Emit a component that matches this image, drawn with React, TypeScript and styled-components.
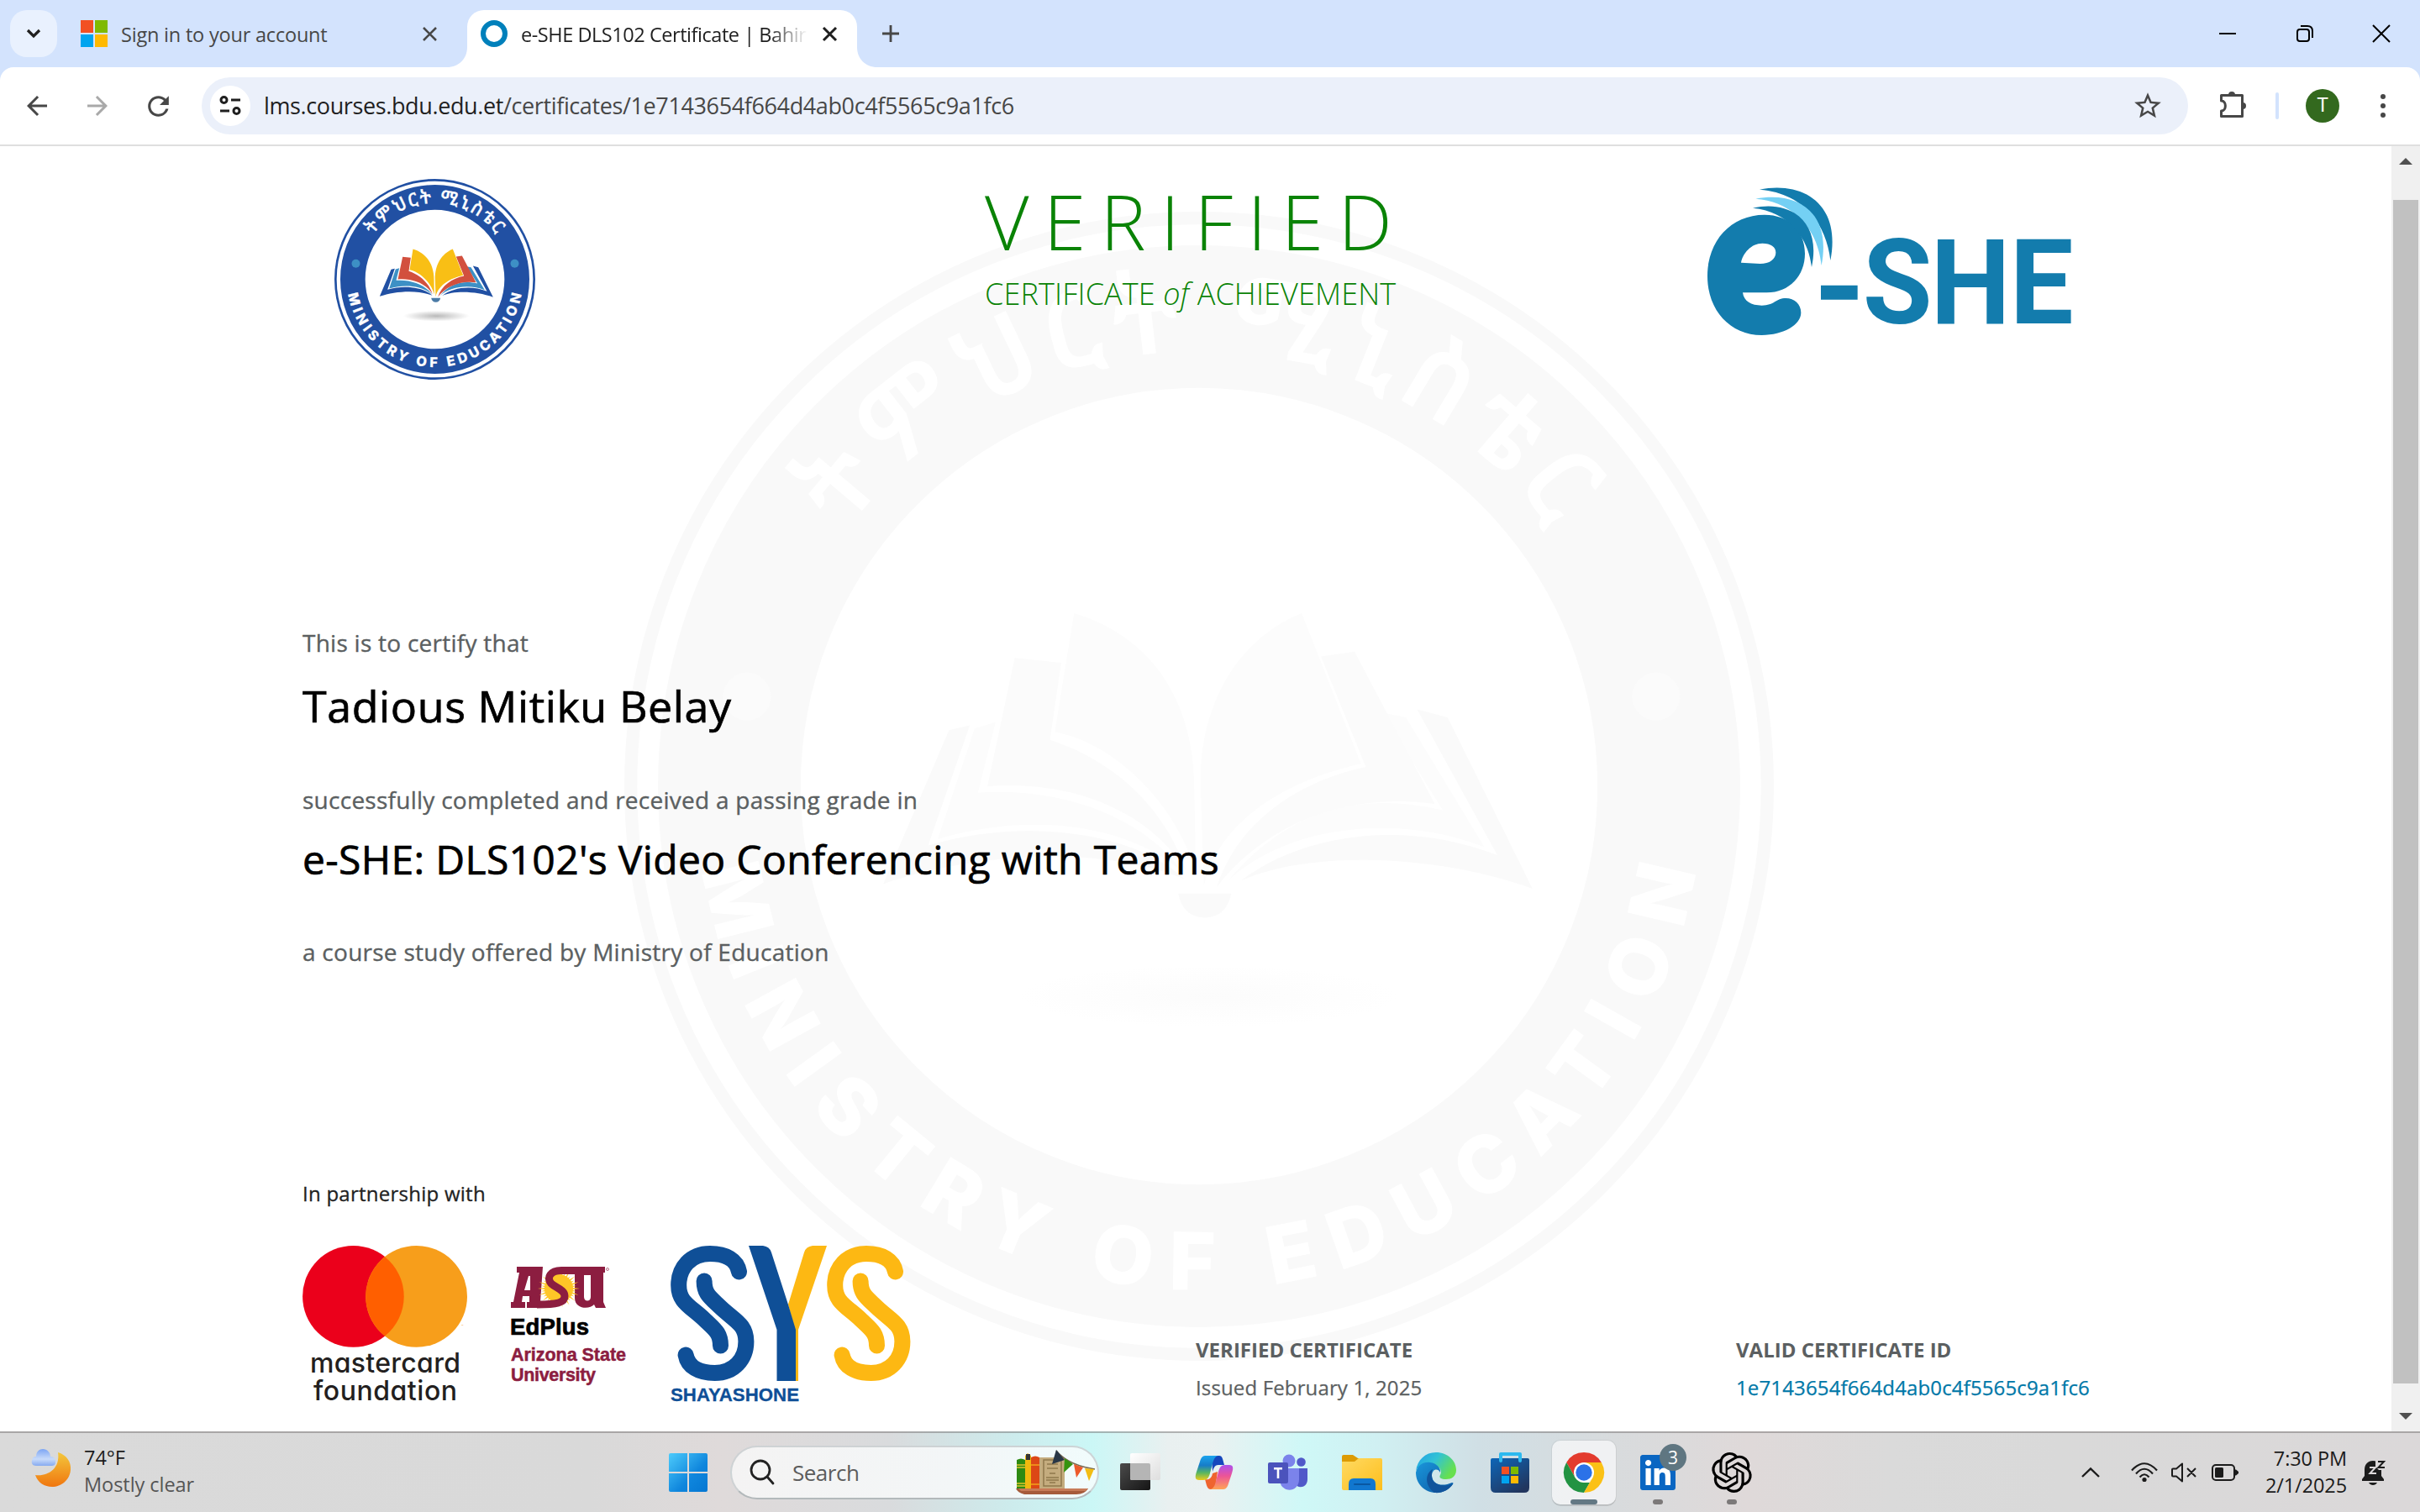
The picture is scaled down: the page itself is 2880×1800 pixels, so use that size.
import React from "react";
import styled, { createGlobalStyle } from "styled-components";
import { MdArrowBack, MdArrowForward, MdRefresh, MdStarBorder } from "react-icons/md";
import { FaLinkedin } from "react-icons/fa";
import { SiOpenai } from "react-icons/si";

const ui = `"Open Sans", "Noto Sans", sans-serif`;

const Global = createGlobalStyle`
  * { box-sizing: border-box; }
  html, body { margin: 0; padding: 0; }
  body { width: 2880px; height: 1800px; overflow: hidden; background: #fff; font-family: ${ui}; }
  svg { display: block; flex: none; overflow: visible; }
`;

const Screen = styled.div`
  width: 2880px;
  height: 1800px;
  display: flex;
  flex-direction: column;
  overflow: hidden;
`;

/* ---------- browser chrome ---------- */

const TabStrip = styled.header`
  height: 80px;
  flex: none;
  display: flex;
  align-items: flex-start;
  padding: 12px 36px 0 12px;
  background: #d3e3fd;
`;

const TabSearch = styled.button`
  width: 56px;
  height: 56px;
  border: 0;
  padding: 0;
  border-radius: 20px;
  background: #e9f1fe;
  display: grid;
  place-items: center;
`;

const Tab = styled.div<{ $active?: boolean; $width: number; $left?: number }>`
  position: relative;
  width: ${(p) => p.$width}px;
  height: ${(p) => (p.$active ? 68 : 56)}px;
  margin-left: ${(p) => p.$left ?? 0}px;
  padding: 0 ${(p) => (p.$active ? 24 : 36)}px ${(p) => (p.$active ? 12 : 0)}px 16px;
  border-radius: 20px 20px 0 0;
  background: ${(p) => (p.$active ? "#fff" : "transparent")};
  color: ${(p) => (p.$active ? "#1f1f1f" : "#474747")};
  display: flex;
  align-items: center;
  gap: 16px;
`;

const TabFoot = styled.svg<{ $side: "left" | "right" }>`
  position: absolute;
  bottom: 0;
  ${(p) => p.$side}: -24px;
  transform: ${(p) => (p.$side === "left" ? "none" : "scaleX(-1)")};
`;

const TabTitle = styled.span<{ $fade?: boolean; $spacing: number }>`
  flex: 1;
  min-width: 0;
  padding-top: 1px;
  overflow: hidden;
  white-space: nowrap;
  font-size: 23.5px;
  line-height: 36px;
  letter-spacing: ${(p) => p.$spacing}px;
  mask-image: ${(p) => (p.$fade ? "linear-gradient(90deg, #000 calc(100% - 48px), transparent calc(100% - 2px))" : "none")};
`;

const NewTab = styled.div`
  margin: 18px 0 0 30px;
`;

const WindowControls = styled.div`
  margin: 18px 0 0 auto;
  display: flex;
  align-items: center;
  gap: 71.500px;
`;

const ToolbarBack = styled.div`
  background: #d3e3fd;
  flex: none;
`;

const Toolbar = styled.nav`
  height: 94px;
  padding: 12px 41px 0 26px;
  border-radius: 16px 16px 0 0;
  border-bottom: 2px solid #dfdfdf;
  background: #fff;
  display: flex;
  align-items: flex-start;
  color: #474747;
`;

const NavButtons = styled.div`
  width: 214px;
  height: 68px;
  display: flex;
  align-items: center;
  gap: 36px;
  & > svg:nth-child(2) { color: #a9a9a9; }
`;

const Omnibox = styled.div`
  width: 2364px;
  height: 68px;
  padding: 0 29px 0 10px;
  border-radius: 34px;
  background: #ebf0fa;
  display: flex;
  align-items: center;
`;

const SiteInfo = styled.span`
  width: 48px;
  height: 48px;
  border-radius: 50%;
  background: #fff;
  display: grid;
  place-items: center;
`;

const Url = styled.span`
  flex: 1;
  margin-left: 16px;
  padding-bottom: 1px;
  font-size: 27px;
  letter-spacing: -0.38px;
  color: #474747;
  b { font-weight: 400; color: #1f1f1f; }
`;

const ToolbarEnd = styled.div`
  height: 68px;
  margin-left: auto;
  display: flex;
  align-items: center;
`;

const Divider = styled.i`
  width: 4px;
  height: 32px;
  margin: 0 32px 0 34px;
  border-radius: 2px;
  background: #d3e3fd;
`;

const Avatar = styled.span`
  width: 40px;
  height: 40px;
  border-radius: 50%;
  background: #33691e;
  color: #fff;
  font: 400 23px/40px Roboto, sans-serif;
  text-align: center;
`;

/* ---------- certificate ---------- */

const Viewport = styled.main`
  height: 1530px;
  flex: none;
  display: flex;
  background: #fff;
`;

const Certificate = styled.article`
  position: relative;
  width: 2846px;
  padding-left: 360px;
  overflow: hidden;
  display: flex;
  flex-direction: column;
`;

const Watermark = styled.div`
  position: absolute;
  left: 743px;
  top: 78px;
`;

const Layer = styled.div`
  position: relative;
  display: flex;
  flex-direction: column;
`;

const CertHeader = styled.header`
  height: 571px;
  padding: 39px 0 0 38px;
  display: flex;
  align-items: flex-start;
`;

const Heading = styled.div`
  width: 860px;
  margin: -2px 0 0 535px;
  color: #0a8306;
  font-weight: 300;
  white-space: nowrap;
`;

const Verified = styled.h1`
  margin: 0;
  font-size: 91px;
  line-height: 104px;
  font-weight: 300;
  letter-spacing: 17.4px;
`;

const Achievement = styled.p`
  margin: 13px 0 0;
  font-size: 36px;
  line-height: 44px;
  letter-spacing: 0.13px;
`;

const HeaderLogo = styled.div`
  padding-top: 9px;
`;

const Note = styled.p<{ $gap?: number }>`
  margin: ${(p) => p.$gap ?? 0}px 0 0;
  font-size: 28px;
  line-height: 40px;
  letter-spacing: 0.26px;
  -webkit-text-stroke: 0.35px currentColor;
  color: #5b5f61;
  white-space: nowrap;
`;

const Name = styled.h2<{ $size: number; $line: number; $gap: number; $spacing: number }>`
  margin: ${(p) => p.$gap}px 0 0;
  font-size: ${(p) => p.$size}px;
  line-height: ${(p) => p.$line}px;
  letter-spacing: ${(p) => p.$spacing}px;
  -webkit-text-stroke: 0.7px currentColor;
  font-weight: 400;
  color: #000;
  white-space: nowrap;
`;

const PartnersTitle = styled.p`
  margin: 251px 0 0;
  font-size: 24px;
  line-height: 34px;
  letter-spacing: 0.25px;
  -webkit-text-stroke: 0.3px currentColor;
  color: #222;
`;

const Footer = styled.footer`
  display: flex;
  align-items: flex-start;
  margin-top: 45px;
`;

const Logos = styled.div`
  width: 1063px;
  display: flex;
  align-items: flex-start;
`;

const MiddleLogo = styled.div`
  padding: 25px 48px 0 51px;
`;

const Fact = styled.section<{ $width: number }>`
  width: ${(p) => p.$width}px;
  padding-top: 107px;
  font-size: 24px;
  line-height: 34px;
  letter-spacing: 0.14px;
  -webkit-text-stroke: 0.25px currentColor;
  color: #5b5f61;
  white-space: nowrap;
  h3 { margin: 0 0 11px; font: inherit; font-weight: 700; letter-spacing: 0; -webkit-text-stroke: 0; }
  a { color: #0078a8; }
`;

const Scrollbar = styled.aside`
  width: 34px;
  padding: 14px 2px 14px;
  background: #f0f0f0;
  display: flex;
  flex-direction: column;
  align-items: center;
  justify-content: space-between;
`;

const Thumb = styled.div`
  width: 30px;
  height: 1409px;
  margin-top: 7px;
  background: #c1c1c1;
`;

/* ---------- taskbar ---------- */

const Taskbar = styled.footer`
  height: 96px;
  flex: none;
  border-top: 2px solid rgba(120, 115, 115, 0.5);
  background: linear-gradient(90deg, #dadada 0, #d9d9d9 700px, #dfdada 860px, #d9dbdd 1060px, #cdebec 1200px, #cbf7f6 1300px, #e9f0f0 1390px, #eaf1f1 1440px, #cff8f7 1550px, #d0f0f2 1640px, #d0dfe5 1760px, #d8dbdd 1920px, #dfd9d9 2080px, #dadada 2250px, #d9d9d9 2450px, #dbd8d9 2880px);
  background-clip: border-box;
  background-origin: border-box;
  display: flex;
  align-items: stretch;
  color: #1b1b1b;
`;

const Weather = styled.section`
  width: 790px;
  padding: 15px 0 0 36px;
  display: flex;
  gap: 12px;
`;

const TwoLines = styled.div<{ $end?: boolean; $spacing?: number; $width?: number }>`
  width: ${(p) => (p.$width ? `${p.$width}px` : "auto")};
  margin-top: -2px;
  display: flex;
  flex-direction: column;
  text-align: ${(p) => (p.$end ? "right" : "left")};
  font-size: 23.5px;
  line-height: 32px;
  letter-spacing: ${(p) => p.$spacing ?? 0}px;
  white-space: nowrap;
  & > span + span { color: ${(p) => (p.$end ? "#1b1b1b" : "#555")}; }
`;

const Start = styled.div`
  width: 79px;
  display: flex;
  align-items: center;
  padding-left: 6px;
`;

const Search = styled.div`
  width: 439px;
  height: 64px;
  margin-top: 15px;
  padding: 0 1px 0 21px;
  border: 2px solid rgba(190, 196, 198, 0.7);
  border-bottom-color: #b3b9bb;
  border-radius: 32px;
  background: linear-gradient(90deg, #f4f3f3, #f3f6f7 60%, #f1fcfc);
  display: flex;
  align-items: center;
  font-size: 26px;
  letter-spacing: -0.5px;
  color: #5c5c5c;
  span { flex: 1; margin-left: 21px; }
`;

const Apps = styled.div`
  display: flex;
  align-items: center;
  padding-left: 5px;
`;

const AppSlot = styled.div<{ $open?: boolean }>`
  position: relative;
  width: 76px;
  height: 76px;
  margin: 0 6px;
  border-radius: 10px;
  background: ${(p) => (p.$open ? "rgba(248, 248, 250, 0.75)" : "transparent")};
  box-shadow: ${(p) => (p.$open ? "0 0 0 1px rgba(0,0,0,.05), 0 2px 0 rgba(0,0,0,.1)" : "none")};
  display: grid;
  place-items: center;
`;

const Running = styled.i<{ $wide?: boolean }>`
  position: absolute;
  bottom: 0;
  left: 50%;
  width: ${(p) => (p.$wide ? 32 : 12)}px;
  height: 6px;
  border-radius: 3px;
  transform: translateX(-50%);
  background: ${(p) => (p.$wide ? "#637884" : "#7c7979")};
`;

const Badge = styled.b`
  position: absolute;
  top: 4px;
  left: 40px;
  width: 32px;
  height: 32px;
  border-radius: 50%;
  background: #5f7681;
  color: #fff;
  font-size: 21px;
  font-weight: 400;
  line-height: 32px;
  text-align: center;
`;

const LinkedIn = styled.div`
  width: 42px;
  height: 42px;
  border-radius: 5px;
  background: #fff;
  color: #0a66c2;
  svg { margin: -3px; }
`;

const Tray = styled.section`
  margin-left: auto;
  padding-right: 41px;
  display: flex;
  align-items: center;
`;

const TrayIcon = styled.svg<{ $left: number }>`
  margin-left: ${(p) => p.$left}px;
`;

/* ---------- drawings ---------- */

const Cross = ({ size, width }: { size: number; width: number }) => (
  <svg width={size} height={size} viewBox={`0 0 ${size} ${size}`} stroke="currentColor" strokeWidth={width}>
    <path d={`M1 1L${size - 1} ${size - 1}M${size - 1} 1L1 ${size - 1}`} />
  </svg>
);

type Tones = { ring: string; dark: string; light: string; red: string; gold: string; base: string; dot: string; shade: string };

const colours: Tones = { ring: "#2150a3", dark: "#2150a3", light: "#3d90c5", red: "#d2503e", gold: "#f9bf15", base: "#4b7ba6", dot: "#3d90c5", shade: "#8b8b8b" };
const pale: Tones = { ring: "#f9f9f9", dark: "#fafafa", light: "#fcfcfc", red: "#fbfbfb", gold: "#fcfcfc", base: "#fafafa", dot: "#fbfbfb", shade: "#fafafa" };

const Seal = ({ size, tones, id, soft }: { size: number; tones: Tones; id: string; soft: number }) => (
  <svg width={size} height={size} viewBox="53.5 39.5 717 717">
    <defs>
      <path id={`${id}-low`} d="M98 398A314 314 0 0 0 726 398" />
      <path id={`${id}-top`} d="M140 398A272 272 0 0 1 684 398" />
      <radialGradient id={`${id}-shade`}>
        <stop offset="0" stopColor={tones.shade} stopOpacity={soft} />
        <stop offset="1" stopColor={tones.shade} stopOpacity="0" />
      </radialGradient>
    </defs>
    <circle cx="412" cy="398" r="354.5" fill="none" stroke={tones.ring} strokeWidth="8" />
    <circle cx="412" cy="398" r="293" fill="none" stroke={tones.ring} strokeWidth="89" />
    <circle cx="130" cy="342" r="15" fill={tones.dot} />
    <circle cx="697" cy="342" r="15" fill={tones.dot} />
    <text fill="#fff" stroke="#fff" strokeWidth="0.6" fontFamily="Inter, sans-serif" fontWeight="800" fontSize="49" textLength="880" lengthAdjust="spacing">
      <textPath href={`#${id}-low`} startOffset="53">MINISTRY OF EDUCATION</textPath>
    </text>
    <text fill="#fff" stroke="#fff" strokeWidth="1" fontFamily={`"Noto Sans Ethiopic", "Noto Sans", sans-serif`} fontWeight="500" fontSize="66" textLength="512" lengthAdjust="spacing">
      <textPath href={`#${id}-top`} startOffset="170">ትምህርት ሚኒስቴር</textPath>
    </text>
    <path fill={tones.dark} d="M256 363L269 360L243 435C300 418 370 425 403 456C350 434 270 440 215 459Z" />
    <path fill={tones.dark} d="M548 350L567 355L620 462C560 440 480 438 438 457C480 425 545 420 598 441Z" />
    <path fill={tones.light} d="M272 362L285 358L274 402C330 398 380 420 402 452C370 423 310 413 249 431Z" />
    <path fill={tones.light} d="M526 352L541 355L590 436C540 416 470 420 430 457C465 415 510 400 564 413Z" />
    <path fill={tones.red} d="M297 318L326 321L319 369C358 382 390 410 404 451C380 412 330 394 280 398Z" />
    <path fill={tones.red} d="M488 317L509 314L559 409C500 401 450 425 423 461C436 420 474 395 516 386Z" />
    <path fill={tones.gold} d="M334 290C378 303 409 340 409 400L410 452C399 412 362 372 322 364Z" />
    <path fill={tones.gold} d="M476 290L513 384C468 394 425 418 415 460L413 400C411 348 436 306 476 290Z" />
    <path fill={tones.base} d="M399 465H432C430 475 424 480 415.500 480C407 480 401 475 399 465Z" />
    <ellipse cx="418" cy="529" rx="118" ry="19" fill={`url(#${id}-shade)`} />
  </svg>
);

const EShe = () => (
  <svg width="436" height="180" viewBox="96 66 1308 540" fill="#137cad">
    <path fillRule="evenodd" d="M300 167C385 167 444 222 444 306C444 385 388 445 308 445H222C226 476 252 491 290 491C335 491 340 465 376 465C406 465 430 486 430 517C430 560 368 597 290 597C178 597 96 508 96 386C96 260 180 167 300 167ZM216 338C222 305 252 269 292 269C322 269 340 281 340 302C340 325 318 342 284 342Z" />
    <path d="M282 77C440 46 574 130 535 330C520 200 440 90 282 77Z" />
    <path fill="#74d0f4" d="M268 110C420 82 540 160 503 348C490 215 400 120 268 110Z" />
    <path d="M258 143C390 112 504 190 468 354C455 235 370 153 258 143Z" />
    <path d="M501 419H632V470H501Z" />
    <g transform="translate(0 555) scale(0.96 1)">
      <text fontFamily="Roboto, sans-serif" fontWeight="700" fontSize="421" x="677 930 1224" y="0">SHE</text>
    </g>
  </svg>
);

const Mastercard = () => (
  <svg width="197" height="192" viewBox="0 0 197 192">
    <circle cx="60.500" cy="60.400" r="60.400" fill="#eb001b" />
    <circle cx="135.600" cy="60.400" r="60.400" fill="#f79e1b" />
    <path fill="#ff5f00" d="M98 13.200A60.400 60.400 0 0 1 98 107.600A60.400 60.400 0 0 1 98 13.200Z" />
    <text x="189" y="97" fontSize="4" fill="#f79e1b" fontFamily="Inter, sans-serif">™</text>
    <g fill="#231f20" fontFamily="Inter, sans-serif" fontWeight="500" fontSize="32" style={{ fontFeatureSettings: '"cv11"' }}>
      <text x="9" y="150.500" textLength="179">mastercard</text>
      <text x="13" y="184" textLength="171">foundation</text>
    </g>
  </svg>
);

const rays = Array.from({ length: 36 }, (_, i) => {
  const a = (i * Math.PI) / 18;
  const r = i % 2 ? 21 : 25;
  const p = (t: number, q: number) => `${(57 + Math.cos(t) * q).toFixed(1)} ${(26 + Math.sin(t) * q * 0.9).toFixed(1)}`;
  return `M${p(a - 0.09, 15)}L${p(a, r)}L${p(a + 0.09, 15)}Z`;
}).join("");

const Asu = () => (
  <svg width="142" height="150" viewBox="0 0 142 150">
    <g fill="#8c1d40" fontFamily='"Liberation Sans", sans-serif' fontWeight="700">
      <path fillRule="evenodd" d="M7 0H38L35 42H38V49H19V42H22V35H14L13 42H17V49H0V42H3L10 7H7ZM16 28H23V11H21Z" />
      <path d="M74 0H91V7H87V36C87 42 95 42 95 36V7H91V0H112V7H110V42L113 49H101L99 45C94 51 76 51 76 37V7H74Z" />
      <path d="M84 0H97V10H87Z" />
      <circle cx="57" cy="26" r="17" fill="#ffc627" />
      <path d={rays} fill="#ffc627" />
      <path d="M84 4.500H60C47 4.500 42 13 48 20C53 25 64 27 64 35C64 43 55 45 31 45" fill="none" stroke="#8c1d40" strokeWidth="9" />
      <circle cx="115" cy="3" r="1.500" fill="none" stroke="#8c1d40" strokeWidth="0.600" />
      <g stroke="#8c1d40" strokeWidth="0.500" fontSize="21.500">
        <text x="0" y="112" textLength="137">Arizona State</text>
        <text x="0" y="135.500" textLength="101">University</text>
      </g>
    </g>
    <text x="-1" y="80.500" fill="#000" stroke="#000" strokeWidth="0.700" fontFamily='"Liberation Sans", sans-serif' fontWeight="700" fontSize="27.500" textLength="94">EdPlus</text>
  </svg>
);

const ribbon = "M81.500 31C79 17 66 9.500 47 9.500C24 9.500 9.700 26 9.700 47C9.700 68 24 72 41 88.500C53 100 59.500 104 59.500 119";

const Ribbon = ({ x, colour }: { x: number; colour: string }) => (
  <g transform={`translate(${x} 0)`} fill="none" stroke={colour} strokeWidth="19" strokeLinecap="round">
    <path d={ribbon} />
    <path d={ribbon} transform="rotate(180 49.800 80.500)" />
  </g>
);

const Shayashone = () => (
  <svg width="286" height="186" viewBox="0 0 286 186">
    <Ribbon x={0} colour="#0f4f97" />
    <Ribbon x={186} colour="#fdb813" />
    <path fill="#fdb813" d="M186 0H169Q161 1 159 8L140 70L148 100V161H152V100Z" />
    <path fill="#0f4f97" d="M93 0H110Q118 1 120 8L140 70L149 100V161H126.500V100Z" />
    <text x="0" y="184.500" fill="#0f4f97" stroke="#0f4f97" strokeWidth="0.300" fontFamily='"Liberation Sans", sans-serif' fontWeight="700" fontSize="22.500" textLength="153" lengthAdjust="spacingAndGlyphs">SHAYASHONE</text>
  </svg>
);

const Moon = () => (
  <svg width="52" height="52" viewBox="0 0 52 52">
    <defs>
      <linearGradient id="moon" x1="0" y1="0" x2="0" y2="1"><stop stopColor="#f3c73c" /><stop offset="1" stopColor="#f0760f" /></linearGradient>
      <linearGradient id="cloud" x1="0" y1="0" x2="0" y2="1"><stop stopColor="#7ca5f4" /><stop offset=".6" stopColor="#c8dbfa" /><stop offset="1" stopColor="#86aaf0" /></linearGradient>
    </defs>
    <path fill="url(#moon)" d="M33 8C43 11 49 19 48 29C47 41 37 49 26 49C17 49 9 44 6 35C20 37 36 28 33 8Z" />
    <path fill="url(#cloud)" d="M7 24C3 24 1 21 2 18C2 15 4 13 7 13C7 7 11 4 15 4C20 4 24 8 24 13C28 13 31 16 30 20C30 23 28 24 25 24Z" />
  </svg>
);

const WindowsLogo = () => (
  <svg width="46" height="46" viewBox="0 0 46 46">
    <defs><linearGradient id="win" gradientUnits="userSpaceOnUse" x1="0" y1="0" x2="46" y2="46"><stop stopColor="#4dcbfb" /><stop offset=".6" stopColor="#0f86dd" /><stop offset="1" stopColor="#0577d2" /></linearGradient></defs>
    <path fill="url(#win)" d="M2 0H22V22H0V2Q0 0 2 0ZM24 0H44Q46 0 46 2V22H24ZM0 24H22V46H2Q0 46 0 44ZM24 24H46V44Q46 46 44 46H24Z" />
  </svg>
);

const BooksArt = () => (
  <svg width="96" height="54" viewBox="0 0 96 54">
    <path fill="#2d8a12" d="M1 12Q6 9 11 12V48H1Z" /><path stroke="#e0c52c" strokeWidth="1.500" d="M1 18H11M1 21H11M1 40H11M1 43H11" />
    <path fill="#f0b90f" d="M11 7L14 4L18 7V48H11Z" /><path fill="#353535" d="M12 5H17V12H12Z" />
    <path fill="#dc4716" d="M18 9Q23 6 28 9V48H18Z" /><path stroke="#f4a21c" strokeWidth="1.500" d="M18 18H28M18 41H28" />
    <path fill="#c4ac7e" d="M28 9H58V48H28Z" /><path fill="none" stroke="#8e784c" strokeWidth="1.500" d="M33 12H54V43H33ZM37 17H50M37 22H50M40 28H47M36 33H51M36 36H51M40 39H47" />
    <path fill="#a65b3b" d="M0 46H86Q82 53 72 53H10Q2 51 0 46Z" /><path fill="#c77b58" d="M3 46H86L83 49H6Z" />
    <path fill="none" stroke="#786850" strokeWidth="1.500" d="M48 1Q62 18 94 23" />
    <path fill="#293746" d="M48 0L58 12L43 17Z" /><path fill="#36930f" d="M58 10L68 17L57 27Z" /><path fill="#ed5a2b" d="M69 17L80 21L72 33Z" /><path fill="#f2bd13" d="M82 22L93 23L87 37Z" />
  </svg>
);

const TaskView = () => (
  <svg width="48" height="46" viewBox="0 0 48 46">
    <defs>
      <linearGradient id="tv" x1="0" y1="0" x2="1" y2="1"><stop stopColor="#fff" /><stop offset="1" stopColor="#dedede" /></linearGradient>
      <linearGradient id="tb" x1="0" y1="0" x2="1" y2="1"><stop stopColor="#4b4b4b" /><stop offset="1" stopColor="#151515" /></linearGradient>
    </defs>
    <rect y="12" width="36" height="32" rx="2" fill="url(#tb)" />
    <rect x="12" y="0" width="36" height="32" rx="2" fill="url(#tv)" />
    <path fill="#b5b5b5" d="M12 12H34Q36 12 36 14V32H14Q12 32 12 30Z" />
  </svg>
);

const Copilot = () => (
  <svg width="46" height="42" viewBox="0 0 46 42">
    <defs>
      <linearGradient id="ca" x1="0" y1="0" x2="0" y2="1"><stop stopColor="#1ba4ee" /><stop offset=".4" stopColor="#177cc8" /><stop offset=".7" stopColor="#58b661" /><stop offset="1" stopColor="#eacb1b" /></linearGradient>
      <linearGradient id="cb" x1="0" y1="0" x2="0" y2="1"><stop stopColor="#ae50ed" /><stop offset=".45" stopColor="#ec5497" /><stop offset="1" stopColor="#ffa455" /></linearGradient>
    </defs>
    <path fill="#1647bd" d="M20 1H29C33 1 33 5 35 12H28C23 12 22 17 21 20Z" />
    <path fill="#ef642f" d="M12 29C15 30 20 29 21 22L27 20L24 41H19C14 41 14 35 12 29Z" />
    <path fill="url(#ca)" d="M12 1H28C22 2 22 8 19 18C17 26 16 30 10 30H5C0 30 0 26 2 20L6 8C7 4 9 1 12 1Z" />
    <path fill="url(#cb)" d="M34 41H18C24 40 24 34 27 24C29 16 30 12 36 12H41C46 12 46 16 44 22L40 34C39 38 37 41 34 41Z" />
  </svg>
);

const Teams = () => (
  <svg width="48" height="44" viewBox="0 0 48 44">
    <circle cx="25" cy="8" r="7.500" fill="#7b83eb" /><circle cx="39.500" cy="9.500" r="5.300" fill="#5059c9" />
    <path fill="#5059c9" d="M34 17H47V30C47 41 34 42 32 34Z" />
    <path fill="#7b83eb" d="M14 17H37V30C37 47 14 47 14 30Z" />
    <rect y="10" width="24" height="25" rx="2" fill="#4b53bc" />
    <path fill="#fff" d="M7 16H17V18.500H13.300V29H10.700V18.500H7Z" />
  </svg>
);

const Folder = () => (
  <svg width="48" height="44" viewBox="0 0 48 44">
    <defs><linearGradient id="fo" x1="0" y1="0" x2="1" y2="1"><stop stopColor="#ffda62" /><stop offset="1" stopColor="#fdbe1c" /></linearGradient></defs>
    <path fill="#dd9b04" d="M0 3Q0 1 2 1H13L19 5H30V12H0Z" />
    <path fill="url(#fo)" d="M0 9H15L20 5H46Q48 5 48 7V43H2Q0 43 0 41Z" />
    <path fill="#1177cf" d="M8 43V36Q8 29 14 29H34Q40 29 40 36V43Z" />
    <path stroke="#0a57a1" strokeWidth="2" strokeLinecap="round" d="M15 36H33" />
  </svg>
);

const Edge = () => (
  <svg width="48" height="48" viewBox="0 0 48 48">
    <defs>
      <linearGradient id="ea" x1="0" y1="0" x2="1" y2=".5"><stop stopColor="#1f9fe8" /><stop offset=".5" stopColor="#32c3d4" /><stop offset="1" stopColor="#67e04e" /></linearGradient>
      <linearGradient id="eb" x1="0" y1="0" x2="1" y2="1"><stop stopColor="#1a96da" /><stop offset="1" stopColor="#0c59a4" /></linearGradient>
    </defs>
    <path fill="url(#ea)" d="M0 22C2 9 11 0 24 0C38 0 48 10 48 21C48 29 42 32 36 32C30 32 27 30 29 27C32 22 28 15 19 14C9 12 3 16 0 22Z" />
    <path fill="url(#eb)" d="M0 24C2 15 9 11 17 12C25 13 30 19 29 24C26 18 19 20 19 28C20 39 32 41 43 36C45 36 45 37 43 39C38 45 32 48 24 48C11 48 0 38 0 24Z" />
    <path fill="#10549c" d="M20 20C11 25 10 39 22 48C31 49 39 45 44 38C31 42 19 38 19 28C19 25 19 22 20 20Z" />
  </svg>
);

const Store = () => (
  <svg width="46" height="48" viewBox="0 0 46 48">
    <defs><linearGradient id="st" x1="0" y1="0" x2=".7" y2="1"><stop stopColor="#0e66b8" /><stop offset="1" stopColor="#22365e" /></linearGradient></defs>
    <path fill="url(#st)" d="M0 9Q0 7 2 7H44Q46 7 46 9V42Q46 48 40 48H6Q0 48 0 42Z" />
    <path fill="none" stroke="#2db9ef" strokeWidth="4" strokeLinecap="round" strokeLinejoin="round" d="M12 10V2H35V10" />
    <path fill="#f25022" d="M13 17H22V26H13Z" /><path fill="#7fba00" d="M24 17H33V26H24Z" /><path fill="#00a4ef" d="M13 28H22V37H13Z" /><path fill="#ffb900" d="M24 28H33V37H24Z" />
  </svg>
);

const Chrome = () => (
  <svg width="48" height="48" viewBox="0 0 48 48">
    <path fill="#e33b2e" d="M3.200 12A24 24 0 0 1 44.800 12H24L13.600 30Z" />
    <path fill="#229342" d="M24 48A24 24 0 0 1 3.200 12L13.600 30L24 36L31 36Z" />
    <path fill="#fbc116" d="M24 48L34.400 30L35 24L24 12H44.800A24 24 0 0 1 24 48Z" />
    <circle cx="24" cy="24" r="12" fill="#fff" /><circle cx="24" cy="24" r="9.700" fill="#2b72e8" />
  </svg>
);

/* ---------- sections ---------- */

const Browser = () => (
  <>
    <TabStrip>
      <TabSearch aria-label="Search tabs">
        <svg width="18" height="12" viewBox="0 0 18 12" fill="none" stroke="#1f1f1f" strokeWidth="3.200"><path d="M2 2L9 9L16 2" /></svg>
      </TabSearch>
      <Tab $width={476} $left={12}>
        <svg width="32" height="32" viewBox="0 0 32 32">
          <path fill="#f25022" d="M0 0H15V15H0Z" /><path fill="#7fba00" d="M17 0H32V15H17Z" /><path fill="#00a4ef" d="M0 17H15V32H0Z" /><path fill="#ffb900" d="M17 17H32V32H17Z" />
        </svg>
        <TabTitle $spacing={-0.2}>Sign in to your account</TabTitle>
        <Cross size={17} width={2.6} />
      </Tab>
      <Tab $active $width={464}>
        <TabFoot $side="left" width="24" height="24" viewBox="0 0 24 24"><path fill="#fff" d="M24 0V24H0C14 24 24 14 24 0Z" /></TabFoot>
        <TabFoot $side="right" width="24" height="24" viewBox="0 0 24 24"><path fill="#fff" d="M24 0V24H0C14 24 24 14 24 0Z" /></TabFoot>
        <svg width="32" height="32" viewBox="0 0 32 32"><circle cx="16" cy="16" r="13" fill="none" stroke="#0080bb" strokeWidth="6" /></svg>
        <TabTitle $fade $spacing={-0.45}>e-SHE DLS102 Certificate | Bahir</TabTitle>
        <Cross size={17} width={3} />
      </Tab>
      <NewTab><svg width="20" height="20" viewBox="0 0 20 20" stroke="#474747" strokeWidth="2.800"><path d="M10 0V20M0 10H20" /></svg></NewTab>
      <WindowControls>
        <svg width="20" height="20" viewBox="0 0 20 20"><path stroke="#000" strokeWidth="2" d="M0 10H20" /></svg>
        <svg width="20" height="20" viewBox="0 0 20 20" fill="none" stroke="#000" strokeWidth="2"><rect x="1" y="5" width="14" height="14" rx="3" /><path d="M5 1H13Q19 1 19 7V15" /></svg>
        <svg width="20" height="20" viewBox="0 0 20 20" stroke="#000" strokeWidth="2"><path d="M0 0L20 20M20 0L0 20" /></svg>
      </WindowControls>
    </TabStrip>
    <ToolbarBack>
      <Toolbar>
        <NavButtons><MdArrowBack size={36} /><MdArrowForward size={36} /><MdRefresh size={37} /></NavButtons>
        <Omnibox>
          <SiteInfo>
            <svg width="26" height="24" viewBox="0 0 26 24" fill="none" stroke="#1f1f1f" strokeWidth="3"><circle cx="5.500" cy="5" r="3.500" /><path d="M14 5H25M1 18H12" /><circle cx="20.500" cy="18" r="3.500" /></svg>
          </SiteInfo>
          <Url><b>lms.courses.bdu.edu.et</b>/certificates/1e7143654f664d4ab0c4f5565c9a1fc6</Url>
          <MdStarBorder size={38} />
        </Omnibox>
        <ToolbarEnd>
          <svg width="32" height="32" viewBox="0 0 32 32">
            <path fill="none" stroke="currentColor" strokeWidth="3" strokeLinejoin="round" d="M1.500 10V3.500H26.500V28.500H1.500V22C8 22 8 10 1.500 10Z" />
            <path fill="currentColor" d="M10 3A4 4 0 0 1 18 3ZM27 12A4 4 0 0 1 27 20Z" />
          </svg>
          <Divider />
          <Avatar>T</Avatar>
          <TrayIcon $left={49} width="6" height="28" viewBox="0 0 6 28" fill="currentColor"><circle cx="3" cy="3" r="3" /><circle cx="3" cy="14" r="3" /><circle cx="3" cy="25" r="3" /></TrayIcon>
        </ToolbarEnd>
      </Toolbar>
    </ToolbarBack>
  </>
);

const Page = () => (
  <Viewport>
    <Certificate>
      <Watermark><Seal size={1368} tones={pale} id="mark" soft={0.7} /></Watermark>
      <Layer>
        <CertHeader>
          <Seal size={239} tones={colours} id="seal" soft={0.6} />
          <Heading>
            <Verified>VERIFIED</Verified>
            <Achievement>CERTIFICATE <em>of</em> ACHIEVEMENT</Achievement>
          </Heading>
          <HeaderLogo><EShe /></HeaderLogo>
        </CertHeader>
        <Note>This is to certify that</Note>
        <Name $size={52} $line={70} $gap={20} $spacing={0.58}>Tadious Mitiku Belay</Name>
        <Note $gap={57}>successfully completed and received a passing grade in</Note>
        <Name $size={48} $line={66} $gap={18} $spacing={0.35}>e-SHE: DLS102's Video Conferencing with Teams</Name>
        <Note $gap={57}>a course study offered by Ministry of Education</Note>
        <PartnersTitle>In partnership with</PartnersTitle>
        <Footer>
          <Logos>
            <Mastercard />
            <MiddleLogo><Asu /></MiddleLogo>
            <Shayashone />
          </Logos>
          <Fact $width={643}><h3>VERIFIED CERTIFICATE</h3>Issued February 1, 2025</Fact>
          <Fact $width={430}><h3>VALID CERTIFICATE ID</h3><a>1e7143654f664d4ab0c4f5565c9a1fc6</a></Fact>
        </Footer>
      </Layer>
    </Certificate>
    <Scrollbar>
      <svg width="16" height="8" viewBox="0 0 16 8"><path fill="#505050" d="M0 8L8 0L16 8Z" /></svg>
      <Thumb />
      <svg width="16" height="8" viewBox="0 0 16 8"><path fill="#505050" d="M0 0H16L8 8Z" /></svg>
    </Scrollbar>
  </Viewport>
);

const Bar = () => (
  <Taskbar>
    <Weather>
      <Moon />
      <TwoLines $spacing={-0.05}><span>74°F</span><span>Mostly clear</span></TwoLines>
    </Weather>
    <Start><WindowsLogo /></Start>
    <Search>
      <svg width="30" height="30" viewBox="0 0 30 30" fill="none" stroke="#222" strokeWidth="2.800" strokeLinecap="round"><circle cx="13" cy="12" r="11" /><path d="M21 20L28 28" /></svg>
      <span>Search</span>
      <BooksArt />
    </Search>
    <Apps>
      <AppSlot><TaskView /></AppSlot>
      <AppSlot><Copilot /></AppSlot>
      <AppSlot><Teams /></AppSlot>
      <AppSlot><Folder /></AppSlot>
      <AppSlot><Edge /></AppSlot>
      <AppSlot><Store /></AppSlot>
      <AppSlot $open><Chrome /><Running $wide /></AppSlot>
      <AppSlot><LinkedIn><FaLinkedin size={48} /></LinkedIn><Badge>3</Badge><Running /></AppSlot>
      <AppSlot><SiOpenai size={48} color="#000" /><Running /></AppSlot>
    </Apps>
    <Tray>
      <svg width="22" height="12" viewBox="0 0 22 12" fill="none" stroke="currentColor" strokeWidth="2.400"><path d="M1 11L11 1.500L21 11" /></svg>
      <TrayIcon $left={37} width="32" height="24" viewBox="0 0 32 24" fill="none" stroke="currentColor" strokeWidth="2.200"><path d="M1 9.500Q16 -7 31 9.500M6 13.500Q16 2 26 13.500M10.500 17.500Q16 11 21.500 17.500" /><circle cx="16" cy="20.500" r="2.600" fill="currentColor" stroke="none" /></TrayIcon>
      <TrayIcon $left={16} width="30" height="24" viewBox="0 0 30 24" fill="none" stroke="currentColor" strokeWidth="2"><path d="M1 8.500Q1 7.500 2 7.500H6L13 1.500V22.500L6 16.500H2Q1 16.500 1 15.500ZM19 7L29 17M29 7L19 17" strokeLinejoin="round" /></TrayIcon>
      <TrayIcon $left={18} width="32" height="20" viewBox="0 0 32 20"><rect x="1" y="1" width="26" height="18" rx="4" fill="none" stroke="currentColor" strokeWidth="2" /><rect x="4" y="4" width="10" height="12" rx="1.500" fill="currentColor" /><path fill="currentColor" d="M28 6.500H29L32 9V11L29 13.500H28Z" /></TrayIcon>
      <TwoLines $end $spacing={-0.1} $width={129}><span>7:30 PM</span><span>2/1/2025</span></TwoLines>
      <TrayIcon $left={18} width="28" height="30" viewBox="0 0 28 30"><path fill="currentColor" d="M3 12C3 5 7 1 13 1C20 1 23 6 23 12V19L26 23V25H0V23L3 19ZM8 27H18C17 29 15 30 13 30C11 30 9 29 8 27Z" /><path fill="#dbd8d9" d="M16 0H28V12H20L16 8Z" /><path fill="none" stroke="currentColor" strokeWidth="2" d="M19 2H26L19.500 9H27" /><path fill="none" stroke="#dbd8d9" strokeWidth="2" d="M9 9H16L9.500 16H17" /></TrayIcon>
    </Tray>
  </Taskbar>
);

export default function App() {
  return (
    <Screen>
      <Global />
      <Browser />
      <Page />
      <Bar />
    </Screen>
  );
}
